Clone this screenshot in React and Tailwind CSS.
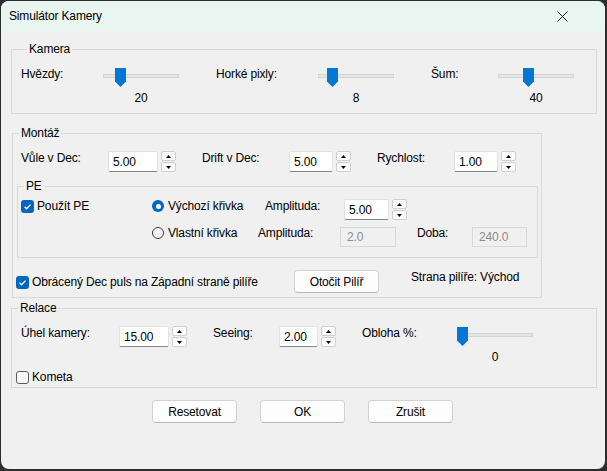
import React from "react";

function Thumb({ pos }) {
  return (
    <svg
      width="11"
      height="19"
      viewBox="0 0 11 19"
      className={`absolute top-[2px] ${pos}`}
    >
      <path d="M0 0H11V13.5L5.5 19L0 13.5Z" fill="#0078d4" />
    </svg>
  );
}

function Slider({ pos, value }) {
  return (
    <div className="flex w-[76px] shrink-0 flex-col items-center">
      <div className="relative h-[22px] w-full">
        <div className="absolute left-0 right-0 top-[8px] h-[4px] border border-[#d4d4d4] bg-[#e6e6e6]" />
        <Thumb pos={pos} />
      </div>
      <div className="mt-[2px] leading-[16px]">{value}</div>
    </div>
  );
}

function Arrow({ up }) {
  return (
    <div className="flex flex-1 items-center justify-center rounded-[2px] border border-[#d0d0d0] bg-[#fdfdfd]">
      <svg width="5" height="3" viewBox="0 0 5 3">
        <path d={up ? "M2.5 0L5 3H0Z" : "M0 0H5L2.5 3Z"} fill="#000" />
      </svg>
    </div>
  );
}

function Num({ value, w }) {
  return (
    <div className="mt-[1px] flex shrink-0 items-start">
      <div
        className={`flex h-[21px] ${w} items-center rounded-[2px] border border-[#e2e2e2] border-b-[#868686] bg-white pl-[4px] leading-[16px]`}
      >
        {value}
      </div>
      <div className="ml-[3px] flex h-[21px] w-[15px] flex-col gap-[1px]">
        <Arrow up />
        <Arrow />
      </div>
    </div>
  );
}

function Dis({ value, w }) {
  return (
    <div
      className={`mt-[2px] flex h-[20px] ${w} shrink-0 items-center border border-[#d9d9d9] bg-[#f0f0f0] pl-[6px] text-[#8c8c8c] leading-[16px]`}
    >
      {value}
    </div>
  );
}

function Check({ checked, label }) {
  return (
    <div className="flex items-center gap-[3px] leading-[16px] whitespace-nowrap">
      {checked ? (
        <div className="flex h-[13px] w-[13px] items-center justify-center rounded-[3px] bg-[#0067c0]">
          <svg width="13" height="13" viewBox="0 0 13 13">
            <path
              d="M3.6 6.8L5.6 8.8L9.5 4.6"
              fill="none"
              stroke="#fff"
              strokeWidth="1.3"
            />
          </svg>
        </div>
      ) : (
        <div className="h-[13px] w-[13px] rounded-[3px] border border-[#5d5d5d] bg-[#f9f9f9]" />
      )}
      <span>{label}</span>
    </div>
  );
}

function Radio({ checked, label }) {
  return (
    <div className="flex items-center gap-[4px] leading-[16px] whitespace-nowrap">
      {checked ? (
        <div className="flex h-[12px] w-[12px] items-center justify-center rounded-full bg-[#0067c0]">
          <div className="h-[5px] w-[5px] rounded-full bg-white" />
        </div>
      ) : (
        <div className="h-[12px] w-[12px] rounded-full border border-[#3a3a3a] bg-[#f6f6f6]" />
      )}
      <span>{label}</span>
    </div>
  );
}

function Btn({ children, cls }) {
  return (
    <div
      className={`flex h-[23px] w-[85px] items-center justify-center rounded-[4px] border border-[#d3d3d3] border-b-[#b8b8b8] bg-[#fdfdfd] leading-[16px] ${cls}`}
    >
      {children}
    </div>
  );
}

function Group({ title, className, children }) {
  return (
    <fieldset className={`border border-[#d9d9d9] ${className}`}>
      <legend className="ml-[6px] px-[2px] leading-[16px]">{title}</legend>
      {children}
    </fieldset>
  );
}

function Label({ w, children, cls = "" }) {
  return (
    <div className={`${w} shrink-0 leading-[16px] whitespace-nowrap ${cls}`}>
      {children}
    </div>
  );
}

export default function App() {
  return (
    <div className="h-[471px] w-[607px] bg-[#2e2e2e] pl-[1px] pt-[1px] font-['Liberation_Sans',Arial,sans-serif] text-[12px] tracking-[-0.15px] text-black">
      <div className="flex h-[468px] w-[604px] flex-col overflow-hidden rounded-[8px] bg-[#f0f0f0]">
        <div className="flex h-[30px] shrink-0 items-center justify-between bg-[#e9f5f1] pl-[8px] pr-[37px]">
          <span className="leading-[16px]">Simulátor Kamery</span>
          <svg width="11" height="11" viewBox="0 0 11 11">
            <path d="M0.5 0.5L10.5 10.5M10.5 0.5L0.5 10.5" stroke="#1a1a1a" strokeWidth="1" />
          </svg>
        </div>

        <Group title="Kamera" className="ml-[10px] mt-[10px] w-[586px] pb-[7px] pl-[9px] pt-[9px]">
          <div className="flex items-start">
            <Label w="w-[82px]">Hvězdy:</Label>
            <Slider pos="left-[12px]" value="20" />
            <Label w="w-[102px]" cls="ml-[37px]">Horké pixly:</Label>
            <Slider pos="left-[9px]" value="8" />
            <Label w="w-[67px]" cls="ml-[37px]">Šum:</Label>
            <Slider pos="left-[25px]" value="40" />
          </div>
        </Group>

        <Group title="Montáž" className="ml-[11px] mt-[11px] w-[530px] pb-[4px] pt-[9px]">
          <div className="ml-[8px] flex items-start">
            <Label w="w-[87px]">Vůle v Dec:</Label>
            <Num value="5.00" w="w-[50px]" />
            <Label w="w-[87px]" cls="ml-[26px]">Drift v Dec:</Label>
            <Num value="5.00" w="w-[44px]" />
            <Label w="w-[77px]" cls="ml-[26px]">Rychlost:</Label>
            <Num value="1.00" w="w-[44px]" />
          </div>

          <Group title="PE" className="ml-[4px] mt-[6px] w-[521px] pb-[10px] pt-[4px]">
            <div className="flex items-start">
              <div className="ml-[3px] w-[131px] shrink-0">
                <Check checked label="Použít PE" />
              </div>
              <div className="w-[113px] shrink-0">
                <Radio checked label="Výchozí křivka" />
              </div>
              <Label w="w-[79px]">Amplituda:</Label>
              <Num value="5.00" w="w-[45px]" />
            </div>
            <div className="mt-[5px] flex items-start">
              <div className="ml-[134px] w-[106px] shrink-0">
                <Radio label="Vlastní křivka" />
              </div>
              <Label w="w-[82px]">Amplituda:</Label>
              <Dis value="2.0" w="w-[56px]" />
              <Label w="w-[55px]" cls="ml-[21px]">Doba:</Label>
              <Dis value="240.0" w="w-[55px]" />
            </div>
          </Group>

          <div className="mt-[11px] flex items-start">
            <div className="ml-[3px] mt-[5px] w-[278px] shrink-0">
              <Check checked label="Obrácený Dec puls na Západní straně pilíře" />
            </div>
            <Btn cls="mt-[1px]">Otočit Pilíř</Btn>
            <Label w="w-[120px]" cls="ml-[32px]">Strana pilíře: Východ</Label>
          </div>
        </Group>

        <Group title="Relace" className="ml-[10px] mt-[2px] w-[586px] pb-[2px] pt-[9px]">
          <div className="ml-[9px] flex items-start">
            <Label w="w-[98px]">Úhel kamery:</Label>
            <Num value="15.00" w="w-[50px]" />
            <Label w="w-[66px]" cls="ml-[26px]">Seeing:</Label>
            <Num value="2.00" w="w-[39px]" />
            <Label w="w-[95px]" cls="ml-[26px]">Obloha %:</Label>
            <Slider pos="left-0" value="0" />
          </div>
          <div className="ml-[4px] mt-[4px]">
            <Check label="Kometa" />
          </div>
        </Group>

        <div className="ml-[151px] mt-[12px] flex gap-[23px]">
          <Btn>Resetovat</Btn>
          <Btn>OK</Btn>
          <Btn>Zrušit</Btn>
        </div>
      </div>
    </div>
  );
}
